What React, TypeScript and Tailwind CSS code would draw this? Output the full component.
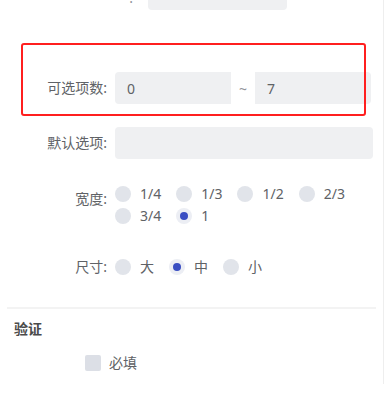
import React from "react";

const widths = ["1/4", "1/3", "1/2", "2/3", "3/4", "1"];
const sizes = ["大", "中", "小"];

function Radio({ label, checked }: { label: string; checked?: boolean }) {
  return (
    <label className="mr-[15px] flex h-[22px] items-center">
      <span
        className={`flex h-4 w-4 items-center justify-center rounded-full ${
          checked ? "bg-[#eceef4]" : "bg-[#e1e4ea]"
        }`}
      >
        {checked && <span className="h-2 w-2 rounded-full bg-[#3a4ec2]" />}
      </span>
      <span className="ml-[9px] text-[14px] leading-[22px] text-[#606266]">{label}</span>
    </label>
  );
}

function Label({ text }: { text: string }) {
  return (
    <div className="w-[108px] shrink-0 pr-[1px] text-right text-[14px] leading-8 text-[#606266]">
      {text}
    </div>
  );
}

export default function App() {
  return (
    <div
      className="relative h-[406px] w-[391px] overflow-hidden bg-white"
      style={{ fontFamily: '"Noto Sans", "Noto Sans CJK SC", sans-serif' }}
    >
      <div className="h-full w-[384px] border-r border-[#eeeeee]">
        {/* cut-off row at the top */}
        <div className="-mt-[22px] flex h-8 items-center">
          <div className="w-[133px] shrink-0 pt-[8px] text-right text-[14px] leading-8 text-[#909399]">
            :
          </div>
          <div className="ml-[15px] h-8 w-[139px] rounded-[4px] bg-[#eff0f2]" />
        </div>

        <div className="mt-[62px] flex items-center">
          <Label text="可选项数:" />
          <div className="ml-[7px] flex items-center">
            <div className="flex h-8 w-[116px] items-center rounded-l-[4px] bg-[#eff0f2] px-3 text-[14px] text-[#606266]">
              0
            </div>
            <div className="w-6 text-center text-[14px] text-[#909399]">~</div>
            <div className="flex h-8 w-[116px] items-center rounded-r-[4px] bg-[#eff0f2] px-3 text-[14px] text-[#606266]">
              7
            </div>
          </div>
        </div>

        <div className="mt-[23px] flex items-center">
          <Label text="默认选项:" />
          <div className="ml-[7px] h-8 w-[258px] rounded-[4px] bg-[#eff0f2]" />
        </div>

        <div className="mt-[24px] flex items-start">
          <Label text="宽度:" />
          <div className="ml-[7px] flex w-[258px] flex-wrap">
            {widths.map((w) => (
              <Radio key={w} label={w} checked={w === "1"} />
            ))}
          </div>
        </div>

        <div className="mt-[24px] flex items-center">
          <Label text="尺寸:" />
          <div className="ml-[7px] flex">
            {sizes.map((s) => (
              <Radio key={s} label={s} checked={s === "中"} />
            ))}
          </div>
        </div>

        <div className="mx-[7px] mt-[24px] h-[2px] bg-[#f3f3f3]" />

        <div className="mt-[10px] pl-[14px] text-[14px] font-bold leading-5 text-[#4a4a4a]">验证</div>

        <div className="mt-[14px] flex items-center pl-[85px]">
          <span className="h-4 w-4 rounded-[2px] bg-[#dcdfe6]" />
          <span className="ml-2 text-[14px] leading-5 text-[#606266]">必填</span>
        </div>
      </div>

      {/* annotation box */}
      <div className="absolute left-[21px] top-[43px] h-[73px] w-[345px] rounded-[3px] border-2 border-[#ff1f1f]" />
    </div>
  );
}
